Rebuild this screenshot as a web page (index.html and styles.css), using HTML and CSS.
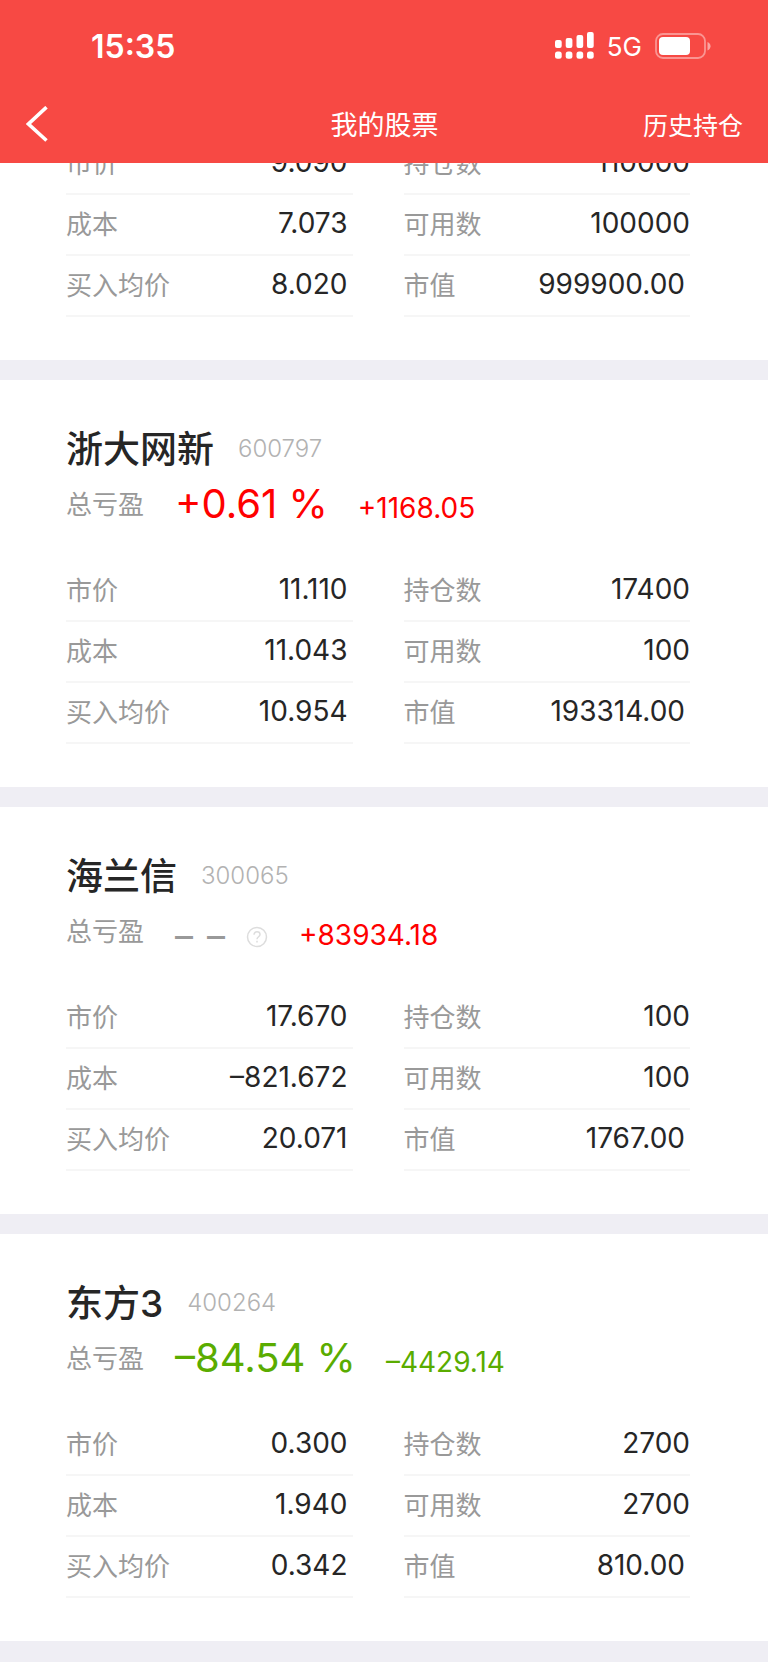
FILE: index.html
```html
<!DOCTYPE html>
<html lang="zh-CN">
<head>
<meta charset="utf-8">
<meta name="viewport" content="width=device-width, initial-scale=1">
<title>我的股票</title>
<link rel="stylesheet" href="styles.css">
</head>
<body>
<header class="header">
  <div class="status">
    <span class="clock">15:35</span>
    <div class="status-icons">
      <svg class="signal" width="39" height="28" viewBox="0 0 39 28" fill="#fff" aria-hidden="true">
        <rect x="0" y="8" width="6.700" height="8" rx="2"/><rect x="10.700" y="6" width="6.700" height="10" rx="2"/><rect x="21.500" y="3" width="6.700" height="13" rx="2"/><rect x="32" y="0" width="6.700" height="16" rx="2"/>
        <rect x="0" y="19.500" width="6.700" height="7.300" rx="2.500"/><rect x="10.700" y="19.500" width="6.700" height="7.300" rx="2.500"/><rect x="21.500" y="19.500" width="6.700" height="7.300" rx="2.500"/><rect x="32" y="19.500" width="6.700" height="7.300" rx="2.500"/>
      </svg>
      <span class="network">5G</span>
      <svg class="battery" width="56" height="26" viewBox="0 0 56 26" aria-hidden="true">
        <rect x="1" y="1" width="49" height="24" rx="7" fill="none" stroke="#fff" stroke-opacity=".42" stroke-width="1.8"/>
        <rect x="4" y="4" width="31" height="18" rx="4" fill="#fff"/>
        <path d="M52.500 9c2 .8 3 2.300 3 4.200s-1 3.400-3 4.200z" fill="#fff" fill-opacity=".5"/>
      </svg>
    </div>
  </div>
  <nav class="nav">
    <button class="back" type="button" aria-label="返回">
      <svg width="22" height="36" viewBox="0 0 22 36" fill="none" stroke="#fff" stroke-width="3.600" aria-hidden="true"><path d="M20.500 1.200L2.500 18L20.500 34.500"/></svg>
    </button>
    <h1 class="title">我的股票</h1>
    <a class="history" href="#history">历史持仓</a>
  </nav>
</header>
<main class="list">
  <section class="card card-first">
    <div class="facts">
      <dl class="col">
        <div class="row"><dt>市价</dt><dd>9.090</dd></div>
        <div class="row"><dt>成本</dt><dd>7.073</dd></div>
        <div class="row"><dt>买入均价</dt><dd>8.020</dd></div>
      </dl>
      <dl class="col col-right">
        <div class="row"><dt>持仓数</dt><dd>110000</dd></div>
        <div class="row"><dt>可用数</dt><dd>100000</dd></div>
        <div class="row"><dt>市值</dt><dd>999900.00</dd></div>
      </dl>
    </div>
  </section>
  <section class="card">
    <div class="head"><h2 class="name">浙大网新</h2><span class="code">600797</span></div>
    <div class="pnl up"><span class="label">总亏盈</span><div class="figures"><span class="percent">+0.61 %</span><span class="amount">+1168.05</span></div></div>
    <div class="facts">
      <dl class="col">
        <div class="row"><dt>市价</dt><dd>11.110</dd></div>
        <div class="row"><dt>成本</dt><dd>11.043</dd></div>
        <div class="row"><dt>买入均价</dt><dd>10.954</dd></div>
      </dl>
      <dl class="col col-right">
        <div class="row"><dt>持仓数</dt><dd>17400</dd></div>
        <div class="row"><dt>可用数</dt><dd>100</dd></div>
        <div class="row"><dt>市值</dt><dd>193314.00</dd></div>
      </dl>
    </div>
  </section>
  <section class="card">
    <div class="head"><h2 class="name">海兰信</h2><span class="code">300065</span></div>
    <div class="pnl up"><span class="label">总亏盈</span><div class="figures"><span class="none"><span>–</span><span>–</span></span><button class="help" type="button" aria-label="说明"><svg width="22" height="22" viewBox="0 0 22 22" fill="none" stroke="#ddd" stroke-width="1.500" aria-hidden="true"><circle cx="11" cy="11" r="9.500"/><path d="M8 8.800c0-1.900 1.300-3 3-3s3 1.100 3 2.700c0 2.200-3 2.300-3 4.700"/><path d="M11 14.800v1.800"/></svg></button><span class="amount">+83934.18</span></div></div>
    <div class="facts">
      <dl class="col">
        <div class="row"><dt>市价</dt><dd>17.670</dd></div>
        <div class="row"><dt>成本</dt><dd>–821.672</dd></div>
        <div class="row"><dt>买入均价</dt><dd>20.071</dd></div>
      </dl>
      <dl class="col col-right">
        <div class="row"><dt>持仓数</dt><dd>100</dd></div>
        <div class="row"><dt>可用数</dt><dd>100</dd></div>
        <div class="row"><dt>市值</dt><dd>1767.00</dd></div>
      </dl>
    </div>
  </section>
  <section class="card">
    <div class="head"><h2 class="name">东方3</h2><span class="code">400264</span></div>
    <div class="pnl down"><span class="label">总亏盈</span><div class="figures"><span class="percent">–84.54 %</span><span class="amount">–4429.14</span></div></div>
    <div class="facts">
      <dl class="col">
        <div class="row"><dt>市价</dt><dd>0.300</dd></div>
        <div class="row"><dt>成本</dt><dd>1.940</dd></div>
        <div class="row"><dt>买入均价</dt><dd>0.342</dd></div>
      </dl>
      <dl class="col col-right">
        <div class="row"><dt>持仓数</dt><dd>2700</dd></div>
        <div class="row"><dt>可用数</dt><dd>2700</dd></div>
        <div class="row"><dt>市值</dt><dd>810.00</dd></div>
      </dl>
    </div>
  </section>
</main>
</body>
</html>
```
FILE: styles.css
```css
* {
  box-sizing: border-box;
}

body {
  margin: 0;
  background: #efeef4;
  color: #262626;
  font-family: Inter, "Noto Sans CJK SC", sans-serif;
}

h1, h2, dl, dd {
  margin: 0;
}

button {
  padding: 0;
  border: 0;
  background: none;
}

svg {
  display: block;
}

/* Header bar covering the scrolled list */
.header {
  position: sticky;
  top: 0;
  z-index: 1;
  background: #f74944;
  color: #fff;
}

.status {
  display: flex;
  align-items: center;
  justify-content: space-between;
  height: 92px;
  padding: 0 57px 0 91px;
}

.clock {
  font-size: 32px;
  font-weight: 600;
}

.status-icons {
  display: flex;
  align-items: center;
  gap: 13px;
}

.network {
  font-size: 26px;
  font-weight: 400;
}

.nav {
  display: grid;
  grid-template-columns: 1fr auto 1fr;
  align-items: center;
  height: 71px;
  padding: 0 25px 8px 26px;
}

.title {
  font-size: 27px;
  font-weight: 400;
}

.history {
  justify-self: end;
  color: #fff;
  font-size: 25px;
  text-decoration: none;
}

/* Holdings */
.list {
  display: flex;
  flex-direction: column;
  gap: 20px;
}

.card {
  padding: 43px 78px 43px 66px;
  background: #fff;
}

.card-first {
  margin-top: -29px;
  padding-top: 0;
}

.head {
  display: flex;
  align-items: center;
  gap: 24px;
  height: 50px;
}

.name {
  padding-bottom: 2px;
  font-size: 37px;
  font-weight: 500;
}

.code {
  color: #b2b2b2;
  font-size: 24px;
  font-weight: 300;
}

.pnl {
  display: flex;
  height: 64px;
  margin-bottom: 24px;
}

.label,
dt {
  color: #999;
  font-size: 26px;
}

.label {
  margin-right: 31px;
  line-height: 64px;
}

.figures {
  font-size: 40px;
  line-height: 62px;
}

.percent {
  margin-right: 30px;
}

.amount {
  font-size: 28px;
}

.none {
  display: inline-flex;
  gap: 14px;
  margin-right: 21px;
  color: #999;
  font-size: 36px;
  vertical-align: -4px;
}

.help {
  margin-right: 31px;
  vertical-align: -3px;
}

.up {
  color: #f00;
}

.down {
  color: #5aac00;
}

.facts {
  display: grid;
  grid-template-columns: 1fr 1fr;
  gap: 51px;
}

.row {
  display: flex;
  align-items: center;
  justify-content: space-between;
  height: 61px;
  padding: 0 5px 4px 0;
  border-bottom: 2px solid #f6f6f6;
}

.col-right .row {
  padding-right: 0;
}

.col-right .row:last-child {
  padding-right: 5px;
}

dd {
  font-size: 28px;
}
```
